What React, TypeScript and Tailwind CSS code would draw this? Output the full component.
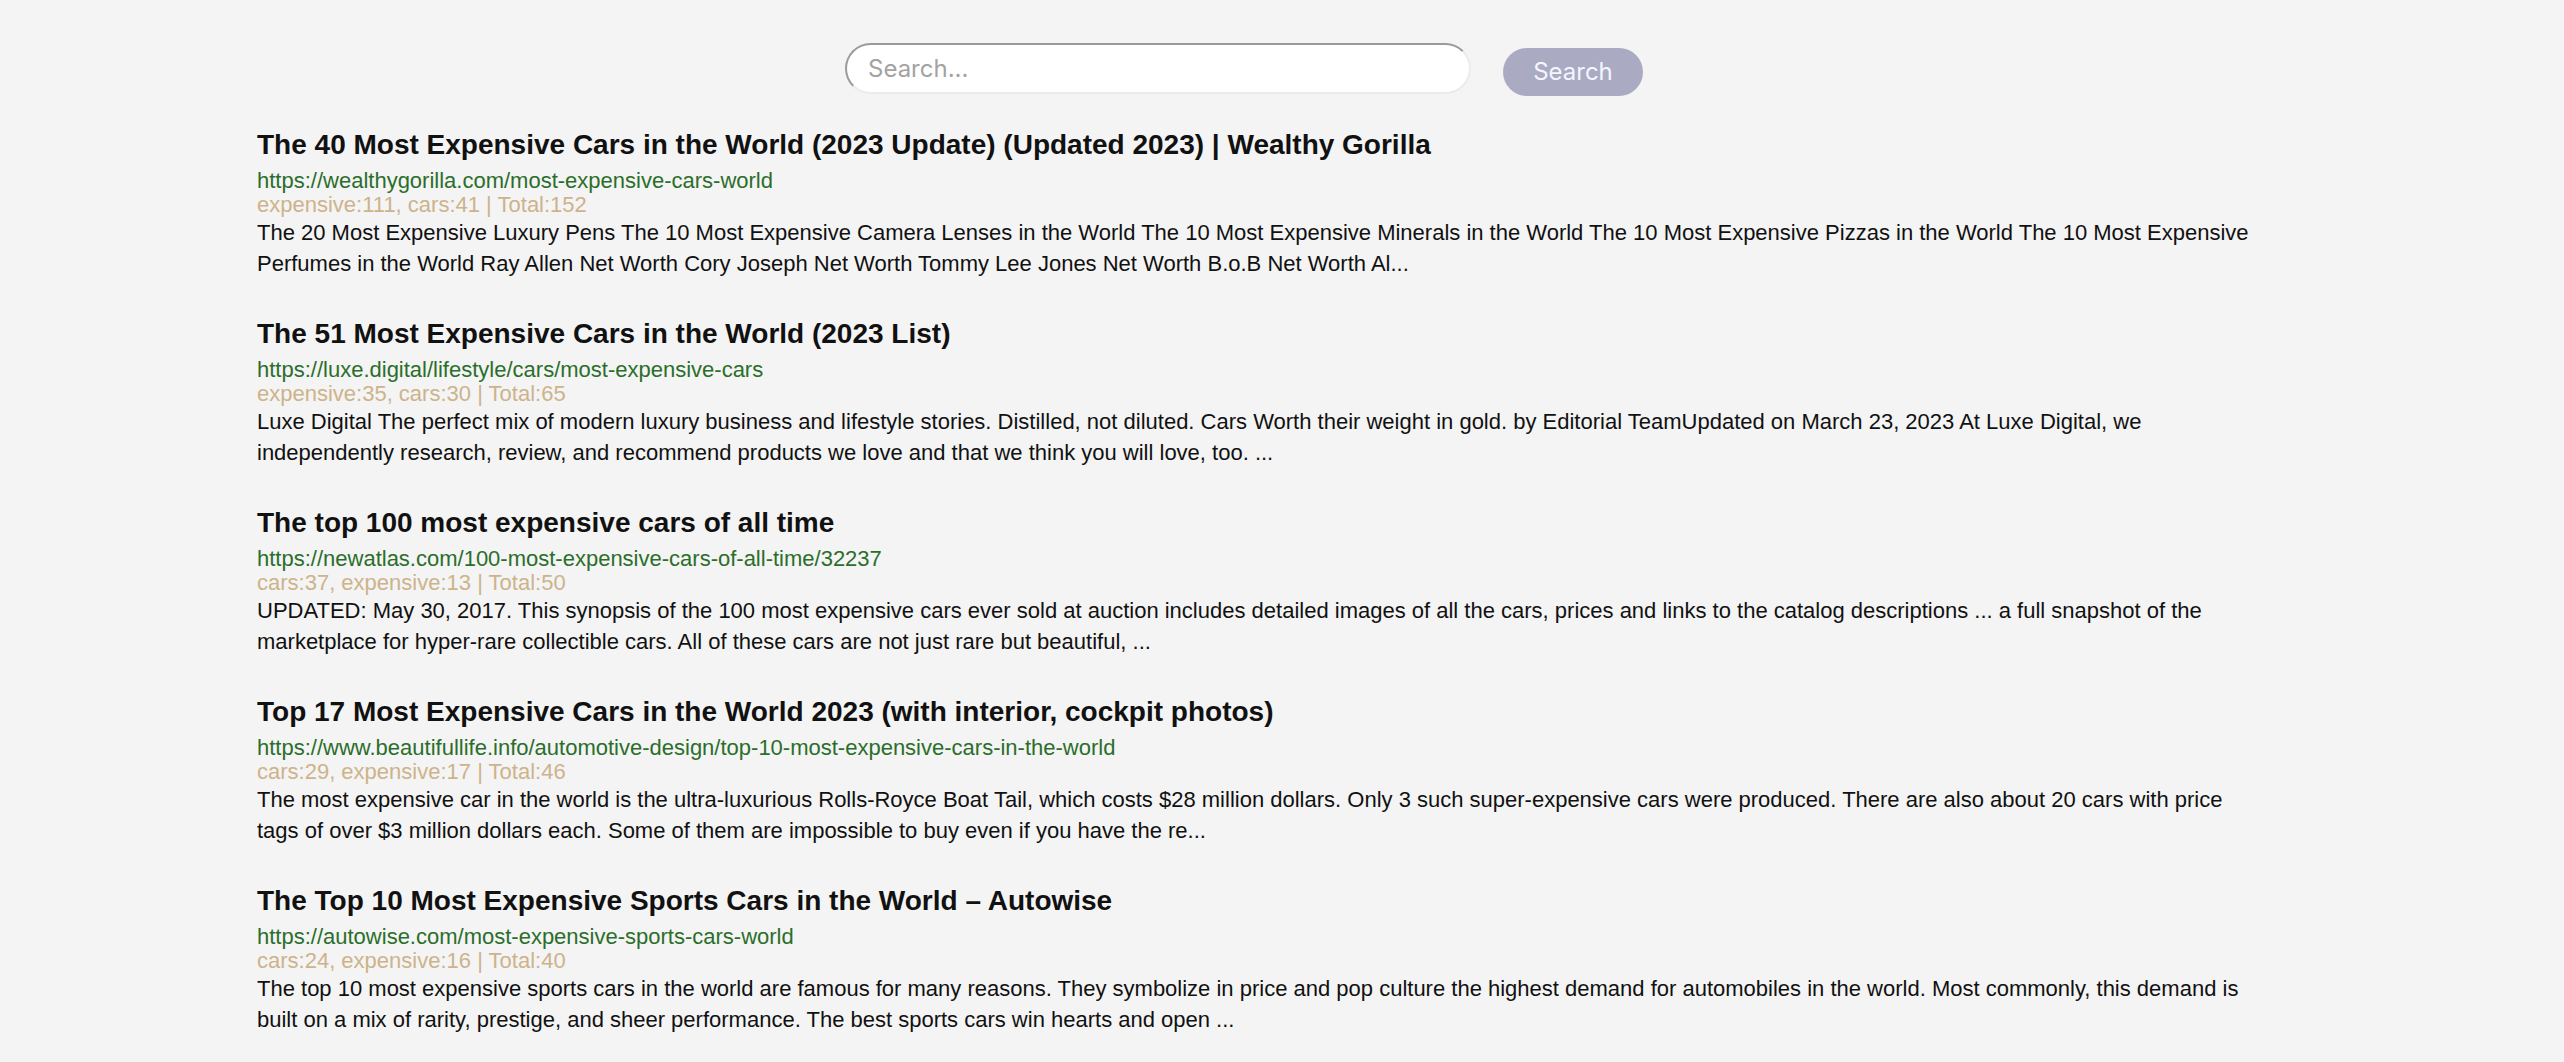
const results = [
  {
    title: 'The 40 Most Expensive Cars in the World (2023 Update) (Updated 2023) | Wealthy Gorilla',
    url: 'https://wealthygorilla.com/most-expensive-cars-world',
    meta: 'expensive:111, cars:41 | Total:152',
    snippet:
      'The 20 Most Expensive Luxury Pens The 10 Most Expensive Camera Lenses in the World The 10 Most Expensive Minerals in the World The 10 Most Expensive Pizzas in the World The 10 Most Expensive Perfumes in the World Ray Allen Net Worth Cory Joseph Net Worth Tommy Lee Jones Net Worth B.o.B Net Worth Al...',
  },
  {
    title: 'The 51 Most Expensive Cars in the World (2023 List)',
    url: 'https://luxe.digital/lifestyle/cars/most-expensive-cars',
    meta: 'expensive:35, cars:30 | Total:65',
    snippet:
      'Luxe Digital The perfect mix of modern luxury business and lifestyle stories. Distilled, not diluted. Cars Worth their weight in gold. by Editorial TeamUpdated on March 23, 2023 At Luxe Digital, we independently research, review, and recommend products we love and that we think you will love, too. ...',
  },
  {
    title: 'The top 100 most expensive cars of all time',
    url: 'https://newatlas.com/100-most-expensive-cars-of-all-time/32237',
    meta: 'cars:37, expensive:13 | Total:50',
    snippet:
      'UPDATED: May 30, 2017. This synopsis of the 100 most expensive cars ever sold at auction includes detailed images of all the cars, prices and links to the catalog descriptions ... a full snapshot of the marketplace for hyper-rare collectible cars. All of these cars are not just rare but beautiful, ...',
  },
  {
    title: 'Top 17 Most Expensive Cars in the World 2023 (with interior, cockpit photos)',
    url: 'https://www.beautifullife.info/automotive-design/top-10-most-expensive-cars-in-the-world',
    meta: 'cars:29, expensive:17 | Total:46',
    snippet:
      'The most expensive car in the world is the ultra-luxurious Rolls-Royce Boat Tail, which costs $28 million dollars. Only 3 such super-expensive cars were produced. There are also about 20 cars with price tags of over $3 million dollars each. Some of them are impossible to buy even if you have the re...',
  },
  {
    title: 'The Top 10 Most Expensive Sports Cars in the World – Autowise',
    url: 'https://autowise.com/most-expensive-sports-cars-world',
    meta: 'cars:24, expensive:16 | Total:40',
    snippet:
      'The top 10 most expensive sports cars in the world are famous for many reasons. They symbolize in price and pop culture the highest demand for automobiles in the world. Most commonly, this demand is built on a mix of rarity, prestige, and sheer performance. The best sports cars win hearts and open ...',
  },
];

export default function App() {
  return (
    <div className="min-h-screen bg-[#f4f4f4] font-['Liberation_Sans',Arial,sans-serif]">
      {/* Search form */}
      <div className="flex justify-center items-start pr-[76px] font-['Inter',sans-serif]">
        <input
          type="text"
          placeholder="Search..."
          className="mt-[43px] w-[626px] h-[51px] rounded-full bg-white border-2 border-t-[#9a9a9a] border-l-[#9a9a9a] border-r-[#ebebeb] border-b-[#ebebeb] pl-[21px] text-[24px] text-[#333] placeholder:text-[#a3a3a3] outline-none"
        />
        <button className="mt-[48px] ml-[32px] w-[140px] h-[48px] rounded-full bg-[#aaaac2] text-[24px] text-[#f4f6ff]">
          Search
        </button>
      </div>

      {/* Results */}
      <div className="ml-[257px] w-[2005px] pt-[31px]">
        {results.map((r, i) => (
          <div key={i} className="mb-[37px]">
            <h3 className="text-[28px] leading-[36px] font-bold text-[#111] mb-[6px]">{r.title}</h3>
            <div className="text-[22px] leading-[24px] text-[#2b6e2b]">{r.url}</div>
            <div className="text-[22px] leading-[24px] text-[#cdb38b]">{r.meta}</div>
            <p className="text-[22px] leading-[31px] text-[#111]">{r.snippet}</p>
          </div>
        ))}
      </div>
    </div>
  );
}
